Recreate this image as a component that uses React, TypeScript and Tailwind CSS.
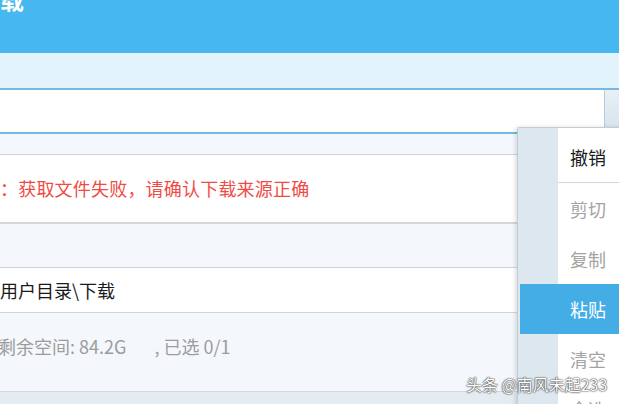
const cjk = "font-['Noto_Sans_CJK_SC','Noto_Sans',sans-serif]";

function ContextMenu() {
  const items = [
    { label: "剪切", active: false },
    { label: "复制", active: false },
    { label: "粘贴", active: true },
    { label: "清空", active: false },
    { label: "全选", active: false },
  ];

  return (
    <div className="absolute left-[517px] top-[127px] w-[120px] rounded-tl-[3px] border-l border-t border-[#c3ccd4] bg-white pt-[4px] shadow-[-2px_0_4px_rgba(0,0,0,0.12)]">
      <div className="absolute bottom-0 left-0 top-0 w-[40px] bg-[#dce7ef]" />
      <div className="relative">
        <div className="flex h-[50px] items-center pl-[52px] text-[18px] text-[#1a1a1a]">
          撤销
        </div>
        <div className="ml-[40px] h-px bg-[#d4d8dc]" />
        <div className="h-px" />
        {items.map((item) => (
          <div
            key={item.label}
            className={
              item.active
                ? "ml-[2px] flex h-[50px] items-center bg-[#44ade6] pl-[50px] text-[18px] text-white"
                : "flex h-[50px] items-center pl-[52px] text-[18px] text-[#a3a3a3]"
            }
          >
            {item.label}
          </div>
        ))}
      </div>
    </div>
  );
}

export default function App() {
  return (
    <div className={`relative h-[404px] w-[619px] overflow-hidden bg-[#f4f8fc] ${cjk}`}>
      {/* title bar */}
      <div className="h-[53px] overflow-hidden bg-[#46b7ef]">
        <div className="-ml-[24px] -mt-[16px] text-[24px] font-bold leading-[30px] text-white">
          下载
        </div>
      </div>
      <div className="h-[35px] bg-[#e2f3fb]" />

      {/* url input */}
      <div className="flex h-[46px] border-b-2 border-t-2 border-[#78b7df] bg-white">
        <div className="flex-1" />
        <div className="w-[15px] border-l border-[#b9c9d5] bg-gradient-to-b from-[#e9f0f6] to-[#d6e2eb]" />
      </div>

      <div className="h-[21px] border-b border-[#cfd5da] bg-[#f4f8fc]" />

      {/* error message */}
      <div className="flex h-[69px] items-center border-b-2 border-[#d3d8dc] bg-white text-[18px] tracking-[0.2px] text-[#ef4b45]">
        <span>：获取文件失败，请确认下载来源正确</span>
      </div>

      <div className="h-[44px] border-b border-[#cfd5da] bg-[#f4f8fc]" />

      {/* save path */}
      <div className="flex h-[45px] items-center border-b border-[#cfd5da] bg-white text-[18px] text-[#1a1a1a]">
        用户目录\下载
      </div>

      <div className="flex h-[79px] items-start border-b border-[#d3d9de] bg-[#f4f8fc] pt-[20px] text-[18px] text-[#9c9c9c]">
        <span className="-ml-[2px]">剩余空间: 84.2G</span>
        <span className="ml-[28px] whitespace-pre">, 已选 0/1</span>
      </div>
      <div className="h-[12px] bg-[#e4ebf1]" />

      <ContextMenu />

      {/* watermark */}
      <div className="absolute left-[466px] top-[374px] whitespace-pre text-[16px] leading-[20px] text-white [text-shadow:0_0_2px_#333,0_0_1px_#000]">
        头条 @南风未起233
      </div>
    </div>
  );
}
